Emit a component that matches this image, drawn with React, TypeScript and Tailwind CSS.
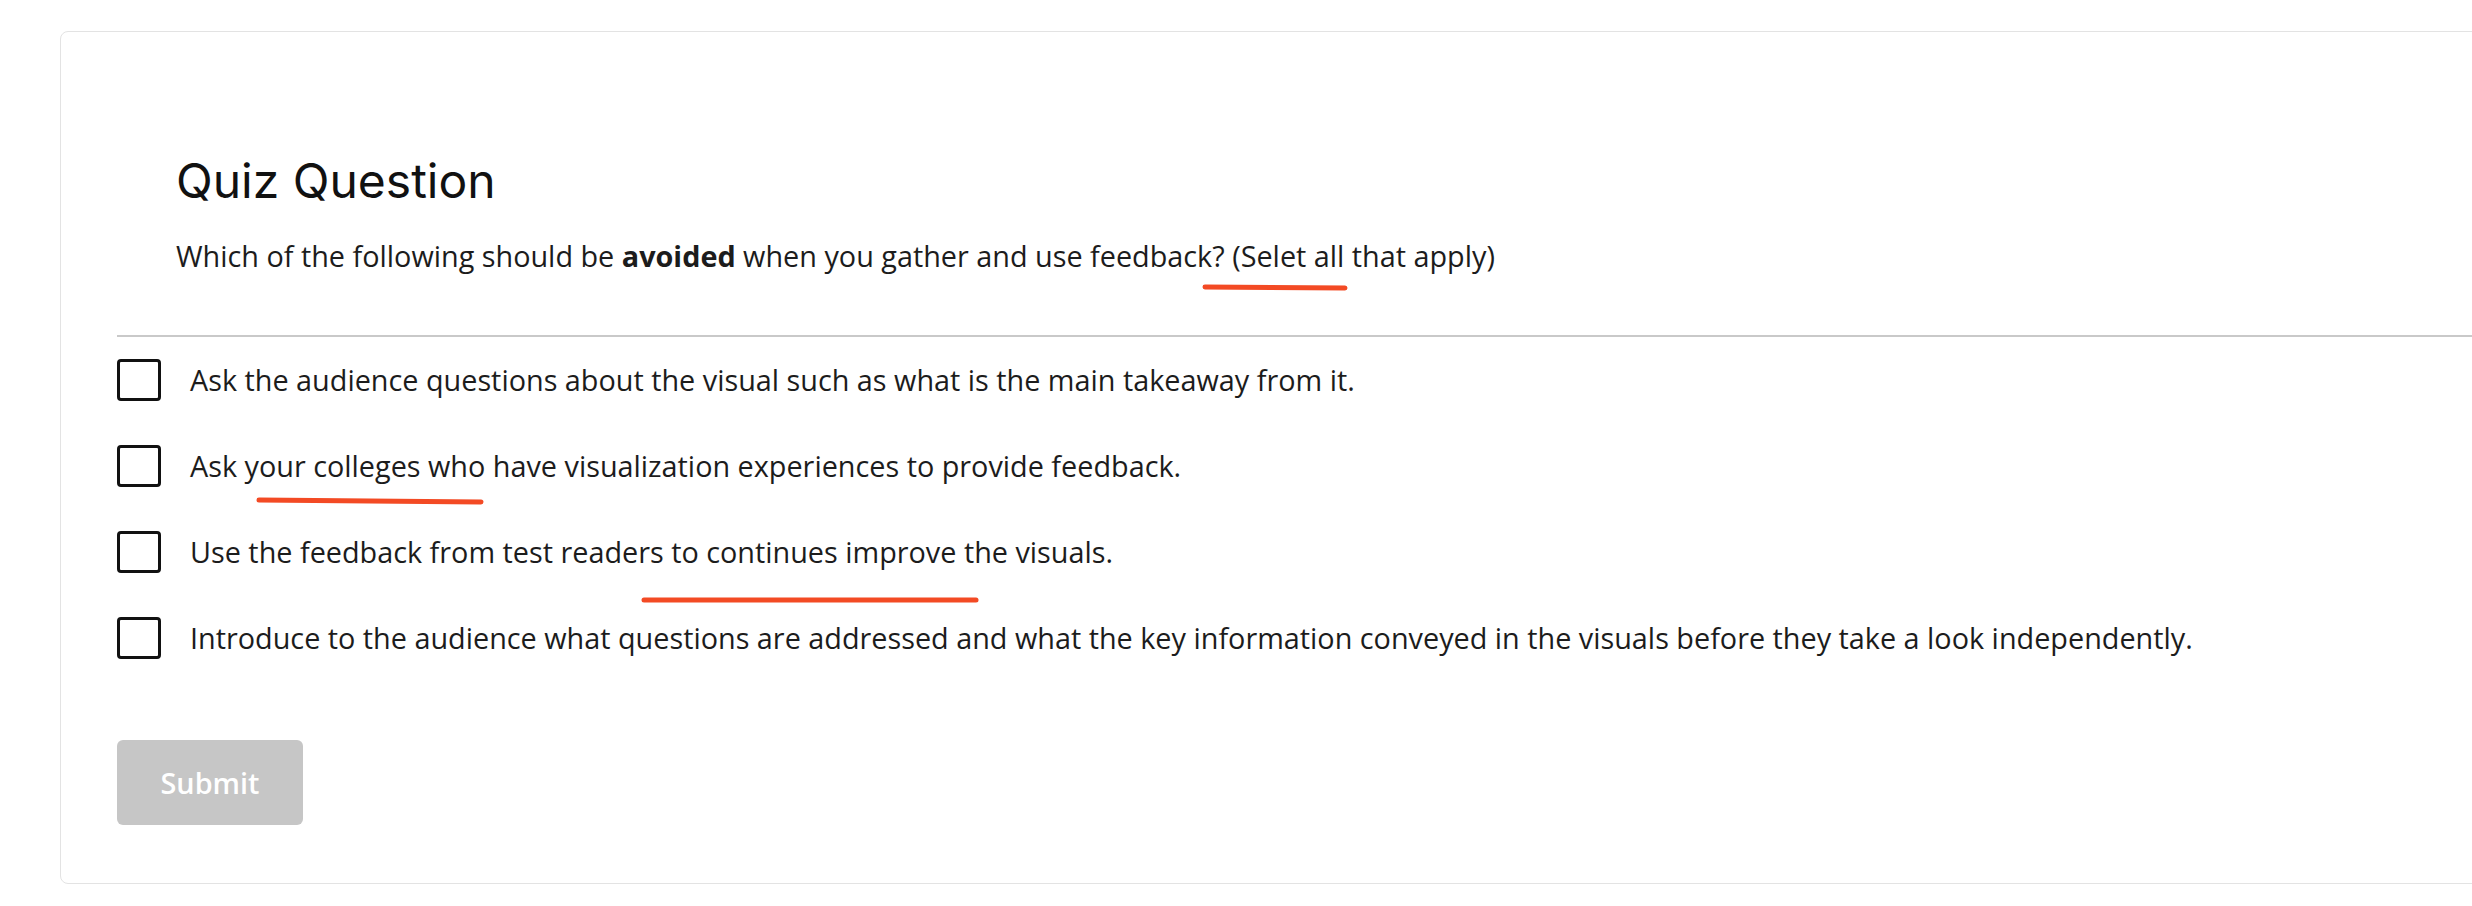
import { useState } from 'react';

const OPTIONS = [
  'Ask the audience questions about the visual such as what is the main takeaway from it.',
  'Ask your colleges who have visualization experiences to provide feedback.',
  'Use the feedback from test readers to continues improve the visuals.',
  'Introduce to the audience what questions are addressed and what the key information conveyed in the visuals before they take a look independently.',
];

// hand-drawn red marks over the text
const MARKS = [
  { x1: 1205, y1: 287, x2: 1345, y2: 288 },
  { x1: 259, y1: 500, x2: 481, y2: 502 },
  { x1: 644, y1: 600, x2: 976, y2: 600 },
];

export default function App() {
  const [checked, setChecked] = useState<boolean[]>(OPTIONS.map(() => false));

  function toggle(i: number) {
    setChecked((prev) => prev.map((v, j) => (j === i ? !v : v)));
  }

  return (
    <div className="relative w-full h-[906px] overflow-hidden bg-white text-[#1c1c1c]">
      <div className="pt-[31px] pl-[60px]">
        <div className="w-[2500px] h-[853px] border border-[#e3e3e3] rounded-[8px] pl-[56px] pt-[125px]">
          {/* Heading */}
          <div className="pl-[59px]">
            <h2 className="text-[48px] leading-[48px] font-normal font-['Inter',sans-serif] text-[#111]">
              Quiz Question
            </h2>
            <p className="mt-[31px] text-[28.8px] leading-[40px] font-['Open_Sans',sans-serif]">
              Which of the following should be <b className="font-bold">avoided</b> when you gather and use
              feedback? (Selet all that apply)
            </p>
          </div>

          <div className="mt-[59px] h-[2px] bg-[#c9c9c9]" />

          {/* Options */}
          <ul className="mt-[22px] flex flex-col gap-[44px]">
            {OPTIONS.map((opt, i) => (
              <li key={i} className="flex items-center gap-[29px]">
                <button
                  onClick={() => toggle(i)}
                  className="w-[44px] h-[42px] shrink-0 border-[3px] border-[#111] rounded-[4px] bg-white flex items-center justify-center"
                >
                  {checked[i] && (
                    <svg viewBox="0 0 20 20" className="w-7 h-7" fill="none" stroke="#111" strokeWidth="2.5">
                      <path d="M4 10.5l4 4 8-9" strokeLinecap="round" strokeLinejoin="round" />
                    </svg>
                  )}
                </button>
                <span className="text-[28.8px] leading-[42px] font-['Open_Sans',sans-serif] whitespace-nowrap">
                  {opt}
                </span>
              </li>
            ))}
          </ul>

          {/* Submit */}
          <button
            disabled
            className="mt-[81px] w-[186px] h-[85px] rounded-[6px] bg-[#c6c6c6] text-white text-[28.8px] font-semibold font-['Open_Sans',sans-serif]"
          >
            Submit
          </button>
        </div>
      </div>

      <svg className="absolute inset-0 pointer-events-none" width="2472" height="906">
        {MARKS.map((m, i) => (
          <line
            key={i}
            x1={m.x1}
            y1={m.y1}
            x2={m.x2}
            y2={m.y2}
            stroke="#f34a24"
            strokeWidth="5"
            strokeLinecap="round"
          />
        ))}
      </svg>
    </div>
  );
}
